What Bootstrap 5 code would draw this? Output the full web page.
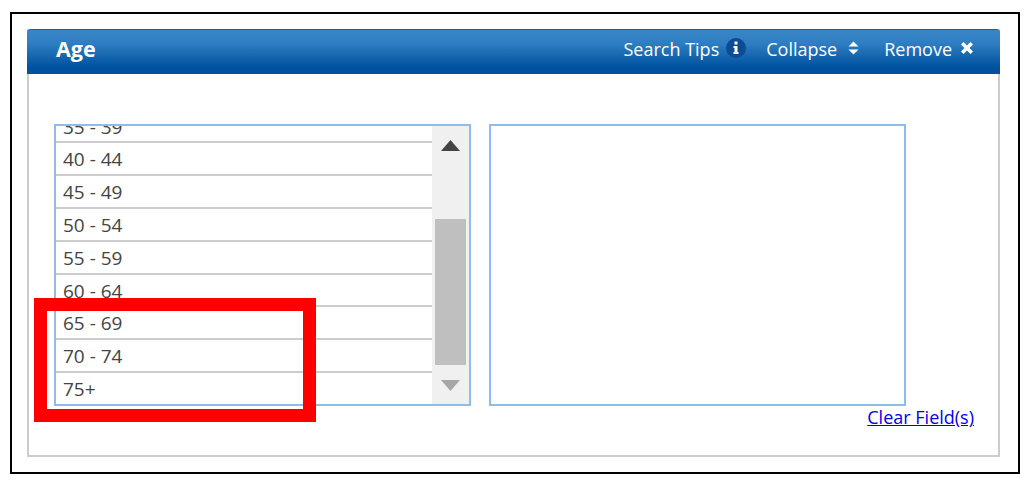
<!DOCTYPE html>
<html lang="en">
<head>
    <meta charset="UTF-8">
    <meta name="viewport" content="width=device-width, initial-scale=1.0">
    <title>Age</title>
    <link href="https://cdn.jsdelivr.net/npm/bootstrap@5.3.0/dist/css/bootstrap.min.css" rel="stylesheet">
    <style>
        html, body { height: 481px; overflow: hidden; background: #fff; }
        body { font-family: "Open Sans", "Noto Sans", sans-serif; font-size: 18px; color: #444; padding: 12px 9px 7px 10px; }
        .shot-frame { position: relative; height: 462px; border: 2px solid #000; padding: 15px 18px 15px 15px; }
        .age-panel { height: 428px; border: 2px solid #ccc; border-top: 0; }
        .age-head { height: 45px; margin: 0 -2px; padding: 0 26px 6px 29px; color: #fff; border-radius: 4px 4px 0 0; border-top: 1px solid #0f5fb5; background: linear-gradient(#3a87c8, #2f7ec2 30%, #00529f 85%); }
        .age-title { font-size: 21.5px; font-weight: 700; }
        .head-links span { display: inline-flex; align-items: center; }
        .head-links svg { margin-top: -2px; }
        .tips-link svg { margin-left: 7px; margin-right: 20px; }
        .collapse-link svg { margin-left: 11px; margin-right: 25px; }
        .remove-link svg { margin-left: 8px; }
        .age-body { padding: 50px 0 0 25px; }
        .pick-box { width: 417px; height: 282px; border: 2px solid #8cbdec; background: #fff; }
        .pick-box + .pick-box { margin-left: 18px; }
        .pick-rows { flex: 1; height: 278px; overflow: hidden; justify-content: flex-end; font-size: 19px; }
        .pick-rows div { flex: 0 0 32.8px; line-height: 28.8px; padding: 2px 0 0 7px; border-bottom: 2px solid #ccc; }
        .pick-rows div:last-child { border-bottom: 0; flex-basis: 31px; line-height: 29px; }
        .pick-scroll { width: 37px; background: #f0f0f0; padding: 0 3px; }
        .scroll-thumb { height: 146px; margin-top: 66px; background: #bfbfbf; }
        .arrow-btn { height: 27px; }
        .arrow-btn svg { display: block; margin: 0 auto; }
        .arrow-up { padding-top: 14px; }
        .arrow-down { padding-top: 15px; }
        .clear-wrap { padding-right: 24px; font-size: 18px; line-height: 22px; }
        .clear-wrap a { color: #0000ee; }
        .red-mark { position: absolute; left: 22px; top: 284px; width: 282px; height: 124px; border: 13px solid #f00; }
    </style>
</head>
<body>
<div class="shot-frame">
    <div class="age-panel">
        <div class="age-head d-flex align-items-center justify-content-between">
            <span class="age-title">Age</span>
            <div class="head-links d-flex">
                <span class="tips-link">Search Tips<svg width="20" height="20" viewBox="0 0 20 20"><circle cx="10" cy="10" r="10" fill="#0b4c93"/><rect x="8.500" y="3.500" width="3" height="3" fill="#fff"/><path d="M7.500 8h4v6h1v2h-5v-2h1v-4h-1z" fill="#fff"/></svg></span>
                <span class="collapse-link">Collapse<svg width="11" height="14" viewBox="0 0 11 14"><path d="M5.500 0.500L10.500 5.500H0.500zM0.500 8.500h10l-5 5z" fill="#fff"/></svg></span>
                <span class="remove-link">Remove<svg width="14" height="14" viewBox="0 0 14 14"><path d="M1 3.500L3.500 1 7 4.500 10.500 1 13 3.500 9.500 7 13 10.500 10.500 13 7 9.500 3.500 13 1 10.500 4.500 7z" fill="#fff"/></svg></span>
            </div>
        </div>
        <div class="age-body">
            <div class="d-flex">
                <div class="pick-box d-flex">
                    <div class="pick-rows d-flex flex-column">
                        <div>35 - 39</div>
                        <div>40 - 44</div>
                        <div>45 - 49</div>
                        <div>50 - 54</div>
                        <div>55 - 59</div>
                        <div>60 - 64</div>
                        <div>65 - 69</div>
                        <div>70 - 74</div>
                        <div>75+</div>
                    </div>
                    <div class="pick-scroll">
                        <div class="arrow-btn arrow-up"><svg width="19" height="11" viewBox="0 0 19 11"><path d="M9.500 0L19 11H0z" fill="#444"/></svg></div>
                        <div class="scroll-thumb"></div>
                        <div class="arrow-btn arrow-down"><svg width="19" height="11" viewBox="0 0 19 11"><path d="M0 0h19L9.500 11z" fill="#a6a6a6"/></svg></div>
                    </div>
                </div>
                <div class="pick-box"></div>
            </div>
            <div class="clear-wrap text-end"><a href="#">Clear Field(s)</a></div>
        </div>
    </div>
    <div class="red-mark"></div>
</div>
<script src="https://cdn.jsdelivr.net/npm/bootstrap@5.3.0/dist/js/bootstrap.bundle.min.js"></script>
</body>
</html>
